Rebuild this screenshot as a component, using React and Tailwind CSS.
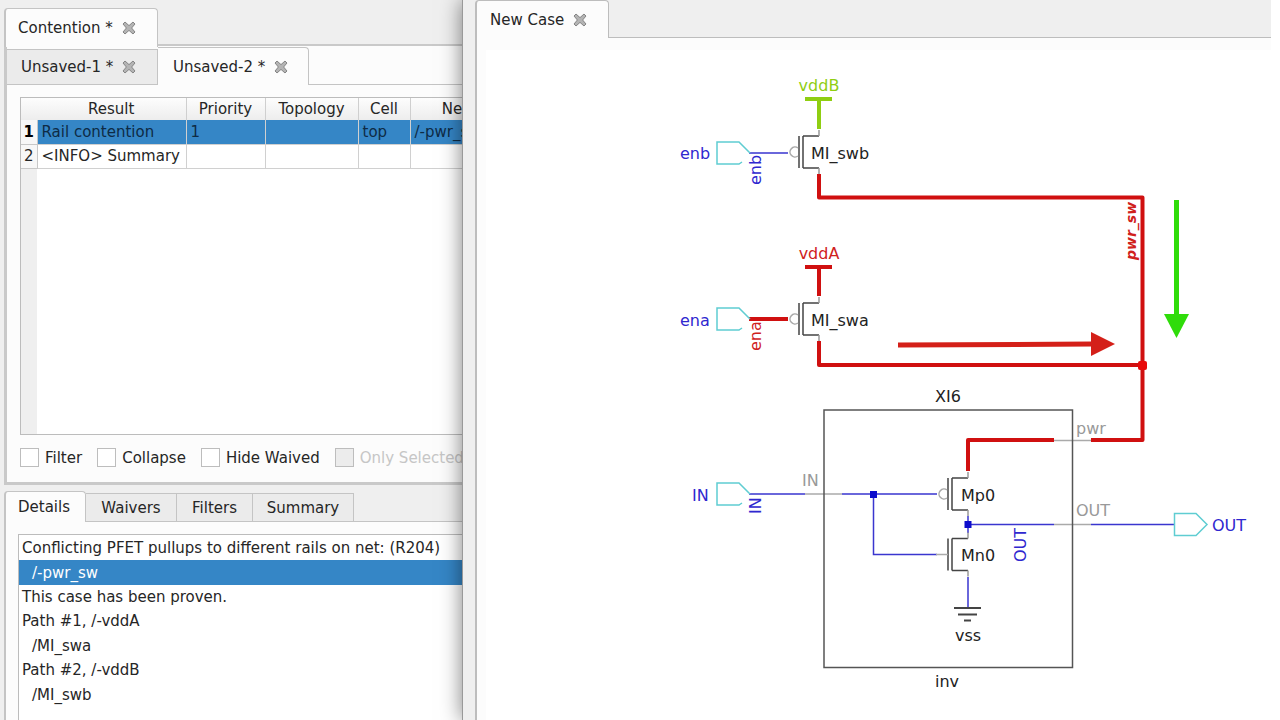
import React from "react";

const Close = () => (
  <svg viewBox="0 0 14 14" className="h-[14px] w-[14px]" aria-hidden="true">
    <path
      d="M3 1 L7 4.6 L11 1 L13 3 L9.6 7 L13 11 L11 13 L7 9.4 L3 13 L1 11 L4.4 7 L1 3 Z"
      fill="#b4b4b4"
      stroke="#858585"
      strokeWidth="1"
      strokeLinejoin="round"
    />
  </svg>
);

const closeTab = "ml-[9px] flex items-center";

const columns = [
  { name: "Result", width: "w-[149px]" },
  { name: "Priority", width: "w-[79px]" },
  { name: "Topology", width: "w-[93px]" },
  { name: "Cell", width: "w-[52px]" },
  { name: "Net", width: "w-[90px]" },
];

const rows = [
  { cells: ["Rail contention", "1", "", "top", "/-pwr_sw"], selected: true },
  { cells: ["<INFO> Summary", "", "", "", ""], selected: false },
];

const filters = [
  { id: "filter", label: "Filter" },
  { id: "collapse", label: "Collapse" },
  { id: "waived", label: "Hide Waived" },
  { id: "selected", label: "Only Selected", disabled: true },
];

const details = [
  { text: "Conflicting PFET pullups to different rails on net: (R204)" },
  { text: "/-pwr_sw", indent: true, selected: true },
  { text: "This case has been proven." },
  { text: "Path #1, /-vddA" },
  { text: "/MI_swa", indent: true },
  { text: "Path #2, /-vddB" },
  { text: "/MI_swb", indent: true },
];

const ResultTable = () => (
  <div className="h-[338px] overflow-hidden border border-r-0 border-[#bcbcbc] bg-white bg-[linear-gradient(to_right,#efefef_16px,#fff_16px)]">
    <table className="w-[479px] table-fixed border-collapse text-left">
      <thead>
        <tr className="h-[22px] bg-linear-to-b from-[#fdfdfd] to-[#ededed]">
          <th className="w-[16px] p-0" />
          {columns.map((col) => (
            <th key={col.name} className={`${col.width} border-r border-[#cfcfcf] p-0 text-center font-normal`}>
              {col.name}
            </th>
          ))}
        </tr>
      </thead>
      <tbody>
        {rows.map((row, i) => (
          <tr key={i} className="h-[24px]">
            <th
              className={`border-r border-b border-[#c8c8c8] bg-[#f7f7f7] p-0 text-center ${
                row.selected ? "font-bold text-black" : "font-normal"
              }`}
            >
              {i + 1}
            </th>
            {row.cells.map((cell, j) => (
              <td
                key={j}
                className={`overflow-hidden border-r border-b border-[#d0d0d0] py-0 pr-0 pl-1 whitespace-nowrap ${
                  row.selected ? "bg-[#3586c6] text-[#0e2b45]" : "bg-white"
                }`}
              >
                {cell}
              </td>
            ))}
          </tr>
        ))}
      </tbody>
    </table>
  </div>
);

const ResultPanel = () => (
  <section className="flex flex-col">
    <div className="flex">
      <div className="z-10 -mb-[3px] flex h-[39px] w-[154px] items-center rounded-t border-t border-r border-l-2 border-[#c4c4c4] bg-[#fcfcfc] pl-[12px]">
        <button type="button">Contention *</button>
        <button type="button" aria-label="Close Contention" className={closeTab}>
          <Close />
        </button>
      </div>
    </div>
    <div className="border-t-2 border-b-3 border-l-3 border-[#c9c9c9] bg-[#fcfcfc]">
      <div className="flex h-[39px] items-end border-b border-[#c4c4c4]">
        <div className="flex h-[35px] w-[151px] items-center border-t border-r border-[#c4c4c4] bg-[#ebebeb] pl-[14px]">
          <button type="button">Unsaved-1 *</button>
          <button type="button" aria-label="Close Unsaved-1" className={closeTab}>
            <Close />
          </button>
        </div>
        <div className="-mb-px flex h-[38px] w-[151px] items-center rounded-tr border-t border-r border-[#c4c4c4] bg-[#fcfcfc] pl-[15px]">
          <button type="button">Unsaved-2 *</button>
          <button type="button" aria-label="Close Unsaved-2" className={closeTab}>
            <Close />
          </button>
        </div>
      </div>
      <div className="pt-[12px] pb-[2px] pl-[13px]">
        <ResultTable />
        <div className="flex h-[45px] items-center gap-[15px] whitespace-nowrap">
          {filters.map((f) => (
            <label
              key={f.id}
              htmlFor={f.id}
              className={`flex items-center gap-[6px] ${f.disabled ? "text-[#c6c6c6]" : ""}`}
            >
              <input
                id={f.id}
                type="checkbox"
                disabled={f.disabled}
                className="h-[19px] w-[19px] appearance-none border border-[#bdbdbd] bg-white disabled:bg-[#ececec]"
              />
              {f.label}
            </label>
          ))}
        </div>
      </div>
    </div>
  </section>
);

const DetailPanel = () => {
  const tab = "h-[28px] border-t border-r border-[#c4c4c4] bg-[#ebebeb]";
  return (
    <section className="mt-[6px] flex flex-1 flex-col">
      <div className="flex h-[31px] items-end border-b border-[#c4c4c4]">
        <button
          type="button"
          className="-mb-px h-[31px] w-[82px] rounded-t border-t border-r border-l-2 border-[#c4c4c4] bg-[#fcfcfc] pr-[3px]"
        >
          Details
        </button>
        <button type="button" className={`${tab} w-[91px]`}>Waivers</button>
        <button type="button" className={`${tab} w-[76px]`}>Filters</button>
        <button type="button" className={`${tab} w-[101px]`}>Summary</button>
      </div>
      <div className="flex flex-1 flex-col border-l-2 border-[#c4c4c4] bg-[#fcfcfc] pt-[12px] pl-[12px]">
        <ul className="flex-1 border-t border-l border-[#bcbcbc] bg-white pt-[1px]">
          {details.map((d) => (
            <li
              key={d.text}
              className={`flex items-center whitespace-nowrap ${d.indent ? "h-[25px] pl-[13px]" : "h-[24px] pl-[3px]"} ${
                d.selected ? "bg-[#3586c6] text-white" : ""
              }`}
            >
              {d.text}
            </li>
          ))}
        </ul>
      </div>
    </section>
  );
};

// Gate, channel and the two stubs; origin is the middle of the gate
const Mosfet = ({ x, y, pmos }) => (
  <g transform={`translate(${x} ${y})`} fill="none" strokeWidth="1.5">
    <path d="M0 -16 V16 M4 -16 V16 M4 -16 H20 M4 16 H20" stroke="#444" />
    <path d="M20 -22 V-16 M20 16 V22" stroke="#999" />
    {pmos ? (
      <path d="M-1 -4 A5 5 0 1 0 -1 4" stroke="#aaa" />
    ) : (
      <path d="M-12 0 H0" stroke="#aaa" />
    )}
  </g>
);

const InPin = ({ x, y }) => (
  <path
    d="M25 9 L22 11 H0 V-11 H22 L33 0"
    transform={`translate(${x} ${y})`}
    fill="none"
    stroke="#5fcdd2"
    strokeWidth="1.5"
  />
);

const Schematic = () => (
  <svg
    viewBox="486 50 794 670"
    width="794"
    height="670"
    role="img"
    aria-label="Schematic"
    className="block shrink-0 text-[16px]"
  >
    <g fill="none" stroke="#3a36cf" strokeWidth="1.5">
      <path d="M749 153 H788 M749 494 H805 M842 494 H937 M873.5 494 V554.5 H937" />
      <path d="M968 516 V533 M968 524.5 H1054 M1091 524.5 H1174 M968 577 V607" />
    </g>
    <path d="M805 494 H842 M1054 440.5 H1091 M1054 524.5 H1091" fill="none" stroke="#aaa" strokeWidth="1.5" />
    <g fill="none" stroke="#d01010" strokeWidth="4" strokeLinejoin="round">
      <path d="M819 174 V197.5 H1142.5 V440 H1091" />
      <path d="M819 341 V365 H1142" />
      <path d="M749 319 H788 M805 267 H832 M819 267 V296" />
      <path d="M968 471 V440 H1054" />
    </g>
    <path d="M805 99 H832 M819 99 V129" stroke="#8fce12" strokeWidth="4" />
    <rect x="1138" y="361" width="9" height="9" rx="2" fill="#e80a0a" />
    <rect x="824" y="410" width="248.5" height="257.5" fill="none" stroke="#555" strokeWidth="1.5" />

    <Mosfet x={799} y={152} pmos />
    <Mosfet x={799} y={319} pmos />
    <Mosfet x={948} y={494} pmos />
    <Mosfet x={948} y={554.5} />
    <g fill="#0c0ccc">
      <rect x="870" y="491" width="7" height="7" />
      <rect x="964.5" y="521" width="7" height="7" />
    </g>
    <path d="M954 608 H981 M958 614.5 H977 M964 620.5 H971" stroke="#444" strokeWidth="2" />

    <InPin x={717} y={153} />
    <InPin x={717} y={319} />
    <InPin x={717} y={494} />
    <path d="M1174.5 513.5 H1196 L1207 524.5 L1196 535.5 H1174.5 Z" fill="none" stroke="#5fcdd2" strokeWidth="1.5" />

    <path d="M898 345 L1092 344" stroke="#d42019" strokeWidth="5" />
    <path d="M1091 332 L1115 344 L1091 356 Z" fill="#d42019" />
    <path d="M1176.5 200 V315" stroke="#2fdc0a" strokeWidth="5" />
    <path d="M1164 314 H1189 L1176.5 338 Z" fill="#2fdc0a" />

    <g fill="#222">
      <text x="811" y="159">MI_swb</text>
      <text x="811" y="326">MI_swa</text>
      <text x="961" y="501">Mp0</text>
      <text x="961" y="561">Mn0</text>
      <text x="948" y="402" textAnchor="middle">XI6</text>
      <text x="968" y="641" textAnchor="middle">vss</text>
      <text x="947" y="687" textAnchor="middle">inv</text>
    </g>
    <g fill="#999">
      <text x="802" y="486">IN</text>
      <text x="1076" y="434">pwr</text>
      <text x="1076" y="516">OUT</text>
    </g>
    <g fill="#2f27cf">
      <text x="680" y="159">enb</text>
      <text x="680" y="326">ena</text>
      <text x="692" y="501">IN</text>
      <text x="1212" y="531">OUT</text>
      <text transform="translate(761 185) rotate(-90)">enb</text>
      <text transform="translate(761 514) rotate(-90)">IN</text>
      <text transform="translate(1026 562) rotate(-90)">OUT</text>
    </g>
    <g fill="#d0211c">
      <text x="819" y="259" textAnchor="middle">vddA</text>
      <text transform="translate(761 351) rotate(-90)">ena</text>
      <text transform="translate(1136 260) rotate(-90)" className="text-[14px] font-bold italic">pwr_sw</text>
    </g>
    <text x="819" y="91" textAnchor="middle" fill="#8fce12">vddB</text>
  </svg>
);

export default function App() {
  return (
    <div className="flex h-screen overflow-hidden bg-[#efefef] font-['DejaVu_Sans',sans-serif] text-[15px] leading-5 text-[#262626]">
      <div className="flex w-[462px] shrink-0 flex-col overflow-hidden pt-[8px] pl-[4px]">
        <ResultPanel />
        <DetailPanel />
      </div>
      <main className="z-10 flex min-w-0 flex-1 flex-col border-r-9 border-l border-r-white border-l-[#999] bg-[#efefef] pl-[12px] shadow-[0_0_20px_rgba(0,0,0,0.5)]">
        <div className="flex h-[38px] items-end border-b border-[#bdbdbd]">
          <div className="-mb-px flex h-[38px] w-[134px] items-center rounded-t border-t border-r border-l-2 border-[#bdbdbd] bg-[#fcfcfc] pl-[13px]">
            <button type="button">New Case</button>
            <button type="button" aria-label="Close New Case" className={closeTab}>
              <Close />
            </button>
          </div>
        </div>
        <div className="flex-1 overflow-hidden border-l-2 border-[#bdbdbd] bg-[#fcfcfc] pt-[12px] pl-[9px]">
          <div className="overflow-hidden bg-white">
            <Schematic />
          </div>
        </div>
      </main>
    </div>
  );
}
